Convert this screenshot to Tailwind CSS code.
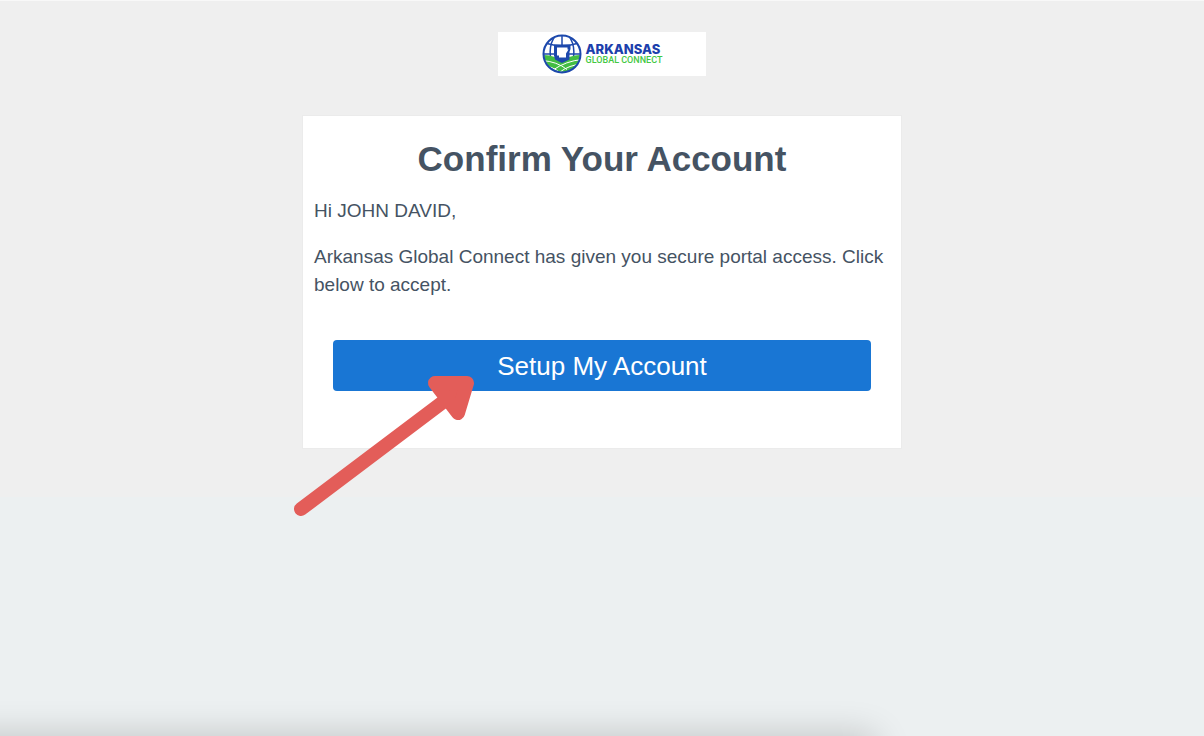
<!DOCTYPE html>
<html lang="en">
<head>
  <meta charset="UTF-8" />
  <meta name="viewport" content="width=device-width, initial-scale=1.0" />
  <title>Confirm Your Account</title>
  <script src="https://cdn.jsdelivr.net/npm/@tailwindcss/browser@4"></script>
</head>
<body class="relative min-h-screen bg-[#ecf0f1] font-['Liberation_Sans',Arial,sans-serif] text-[#455363]">
  <div class="border-t border-[#f8f8f8] bg-[#efefef] px-4 pt-[31px] pb-12">
    <!-- Logo -->
    <div class="mx-auto flex h-11 w-[208px] items-center justify-center gap-1 bg-white">
      <svg class="size-10" viewBox="0 0 40 40" fill="none" aria-hidden="true">
        <defs>
          <clipPath id="globe"><circle cx="20" cy="20" r="18" /></clipPath>
        </defs>
        <g clip-path="url(#globe)">
          <g stroke="#1c48ac" stroke-width="1.5">
            <path d="M20 1v12M5 9.500Q20 14 35 9.500M1 20h38" />
            <path d="M14 1C8 8 7 16 9 26M26 1c6 7 7 15 5 25" />
          </g>
          <path d="M0 21q12 0 20 6.500Q28 21 40 21v19H0z" fill="#43bd43" />
          <path d="M0 26.500q15 1 25 9M0 31.500q11 1 18 7M40 25.500Q24 27 11 36M40 30q-13 1-22 8M40 35q-8 0-14 4" stroke="#fff" stroke-width="1" />
          <path d="M12 10.500H28.500v4.500l-1 3v7.500L20 29l-7-3.500-1-4z" fill="#1c48ac" />
          <path d="M15 13.500h10.500v2h1l-2.500 4v4h-7v-2H15z" fill="#fff" />
        </g>
        <circle cx="20" cy="20" r="18.500" stroke="#1c48ac" stroke-width="2" />
      </svg>
      <div class="whitespace-nowrap">
        <p class="font-[Inter,sans-serif] text-[13px] leading-3 font-extrabold text-[#1c40ac]">ARKANSAS</p>
        <p class="font-[Roboto,sans-serif] text-[9px] leading-[11px] font-medium text-[#43c843]">GLOBAL CONNECT</p>
      </div>
    </div>

    <!-- Card -->
    <main class="mx-auto mt-[39px] max-w-[600px] border border-[#ebebeb] bg-white px-[11px] pt-[21px] pb-[57px]">
      <h1 class="text-center text-[35px] leading-[44px] font-bold">Confirm Your Account</h1>
      <p class="mt-4 text-[19px] leading-7">Hi JOHN DAVID,</p>
      <p class="mt-[18px] text-[19px] leading-7">Arkansas Global Connect has given you secure portal access. Click below to accept.</p>
      <div class="relative mt-[41px] px-[19px]">
        <button type="button" class="block h-[51px] w-full rounded-sm bg-[#1976d4] text-[26px] leading-8 text-white">Setup My Account</button>
        <svg class="absolute top-8 -left-5 h-36 w-[188px] overflow-visible" viewBox="0 0 188 144" aria-hidden="true">
          <path d="M7 137 L153 27" stroke="#e35d59" stroke-width="14" stroke-linecap="round" />
          <path d="M141 11 H173 L164 41 Z" fill="#e35d59" stroke="#e35d59" stroke-width="14" stroke-linejoin="round" />
        </svg>
      </div>
    </main>
  </div>

  <!-- Shadow along the bottom edge -->
  <div class="pointer-events-none absolute inset-x-0 bottom-0 h-16 overflow-hidden">
    <div class="absolute top-full -left-16 h-10 w-[78%] shadow-[0_0_36px_0_rgba(0,0,0,0.2)]"></div>
  </div>
</body>
</html>
